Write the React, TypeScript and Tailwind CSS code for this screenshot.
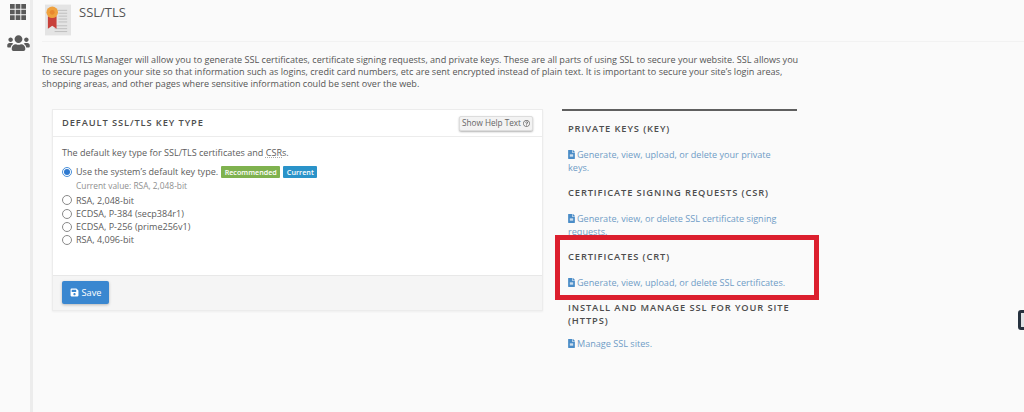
import { FaFileAlt, FaSave, FaRegQuestionCircle, FaUsers } from 'react-icons/fa';
import { TfiLayoutGrid3Alt } from 'react-icons/tfi';

const keyOptions = ['RSA, 2,048-bit', 'ECDSA, P-384 (secp384r1)', 'ECDSA, P-256 (prime256v1)', 'RSA, 4,096-bit'];

function Radio({ checked }: { checked?: boolean }) {
  return (
    <span
      className={[
        'flex h-[10px] w-[10px] shrink-0 items-center justify-center rounded-full border',
        checked ? 'border-[#4a90d9] bg-white' : 'border-[#8a8a8a] bg-white',
      ].join(' ')}
    >
      {checked ? <span className="h-[6px] w-[6px] rounded-full bg-[#2f7ad0]" /> : null}
    </span>
  );
}

function CertIcon() {
  return (
    <svg width="26" height="32" viewBox="0 0 27 32" className="shrink-0">
      <rect width="27" height="32" fill="#e4e4e4" />
      <path d="M13 6h10M14 9h9M14 12h9M14 15h9M14 18h9M10 22h13M10 25h13M10 28h13" stroke="#bdbdbd" strokeWidth="1" />
      <path d="M3 12h9v13l-4.500-3-4.500 3z" fill="#c8403a" />
      <circle cx="7.500" cy="8" r="6" fill="#efa13d" />
      <circle cx="7.500" cy="8" r="2.500" fill="#e8872f" />
    </svg>
  );
}

function ToolSection({ title, tight, children }: { title: string; tight?: boolean; children: React.ReactNode }) {
  return (
    <section>
      <h2 className="text-[9.300px] leading-[13px] font-semibold tracking-[0.9px] text-[#4d4d4d]">{title}</h2>
      <p className={[tight ? 'mt-[10px]' : 'mt-[13px]', 'text-[9.100px] leading-[13px] text-[#6f9cc6]'].join(' ')}>
        <FaFileAlt className="mr-[2px] inline-block h-[9px] w-[7px] align-[-1px] text-[#4a8cc7]" />
        {children}
      </p>
    </section>
  );
}

export default function App() {
  return (
    <div className="relative flex h-[412px] w-[1024px] overflow-hidden bg-[#fafafa] font-['Open_Sans',sans-serif] text-[#5c5c5c]">
      <aside className="flex w-[33px] shrink-0 flex-col items-center border-r-[3px] border-[#ececec] bg-[#fafafa] pl-[6px]">
        <TfiLayoutGrid3Alt className="mt-[4px] h-[16px] w-[18px] text-[#5a5a5a]" />
        <FaUsers className="mt-[14px] h-[18px] w-[23px] text-[#5a5a5a]" />
      </aside>

      <main className="min-w-0 flex-1 pl-[9px]">
        <header className="flex h-[42px] items-start gap-[8px] border-b border-[#f2f2f2] pt-[4px] pl-[3px]">
          <CertIcon />
          <h1 className="text-[13px] leading-[16px] text-[#555]">SSL/TLS</h1>
        </header>

        <p className="mt-[12px] w-[762px] text-[9.070px] leading-[12px] text-[#555]">
          The SSL/TLS Manager will allow you to generate SSL certificates, certificate signing requests, and private keys. These are all parts of using SSL to secure your website. SSL allows you to secure pages on your site so that information such as logins, credit card numbers, etc are sent encrypted instead of plain text. It is important to secure your site’s login areas, shopping areas, and other pages where sensitive information could be sent over the web.
        </p>

        <div className="mt-[19px] ml-[10px] flex items-start gap-[19px]">
          <div className="flex h-[202px] w-[491px] flex-col border border-[#ececec] bg-white shadow-[0_1px_2px_rgba(0,0,0,0.05)]">
            <div className="flex h-[27px] shrink-0 items-center justify-between border-b border-[#ececec] pr-[9px] pl-[9px]">
              <h2 className="text-[9.300px] font-semibold tracking-[0.9px] text-[#4d4d4d]">DEFAULT SSL/TLS KEY TYPE</h2>
              <button type="button" className="flex h-[15px] w-[74px] items-center justify-center gap-[2px] rounded-[2px] border border-[#ddd] bg-[#f3f3f3] text-[8.200px] text-[#666] shadow-[0_1px_2px_rgba(0,0,0,0.3)]">
                Show Help Text
                <FaRegQuestionCircle className="h-[7px] w-[7px]" />
              </button>
            </div>

            <div className="flex-1 pt-[9px] pl-[9px] text-[9.050px] leading-[13.300px]">
              <p className="text-[#5c5c5c]">
                The default key type for SSL/TLS certificates and <span className="underline decoration-dotted decoration-[#aaa]">CSR</span>s.
              </p>
              <div className="mt-[6px] flex items-center gap-[3px]">
                <Radio checked />
                <span className="ml-px">Use the system’s default key type.</span>
                <span className="rounded-[1px] bg-[#7fb24f] px-[3.500px] text-[7.200px] leading-[12px] font-semibold text-white">Recommended</span>
                <span className="rounded-[1px] bg-[#2a93c9] px-[3.500px] text-[7.200px] leading-[12px] font-semibold text-white">Current</span>
              </div>
              <p className="mt-[1px] pl-[14px] text-[8.400px] leading-[12px] text-[#8f8f8f]">Current value: RSA, 2,048-bit</p>
              <div className="mt-[2px] flex flex-col">
                {keyOptions.map((option) => (
                  <label key={option} className="flex items-center gap-[4px]">
                    <Radio />
                    {option}
                  </label>
                ))}
              </div>
            </div>

            <div className="flex h-[35px] shrink-0 items-start border-t border-[#e8e8e8] bg-[#f5f5f5] px-[9px] pt-[5px]">
              <button type="button" className="flex h-[23px] w-[47px] items-center justify-center gap-[3px] rounded-[2px] bg-[#3a87d0] text-[9.200px] text-white shadow-[0_1px_3px_rgba(0,0,0,0.25)]">
                <FaSave className="h-[9px] w-[9px]" />
                Save
              </button>
            </div>
          </div>

          <div className="w-[235px] border-t-2 border-[#5f5f5f] pt-[11px] pr-[7px] pl-[6px]">
            <div className="flex flex-col gap-[12px]">
              <ToolSection title="PRIVATE KEYS (KEY)">Generate, view, upload, or delete your private keys.</ToolSection>
              <ToolSection title="CERTIFICATE SIGNING REQUESTS (CSR)">Generate, view, or delete SSL certificate signing requests.</ToolSection>
              <ToolSection title="CERTIFICATES (CRT)">Generate, view, upload, or delete SSL certificates.</ToolSection>
              <ToolSection title="INSTALL AND MANAGE SSL FOR YOUR SITE (HTTPS)" tight>Manage SSL sites.</ToolSection>
            </div>
          </div>
        </div>
      </main>

      <div className="absolute top-[235px] left-[555px] h-[65px] w-[264px] border-[5px] border-[#dc1f2e]" />
      <div className="absolute top-[310px] left-[1018px] h-[20px] w-[10px] rounded-[3px] border-[3px] border-[#26323f] bg-[#dfe3e6]" />
    </div>
  );
}
